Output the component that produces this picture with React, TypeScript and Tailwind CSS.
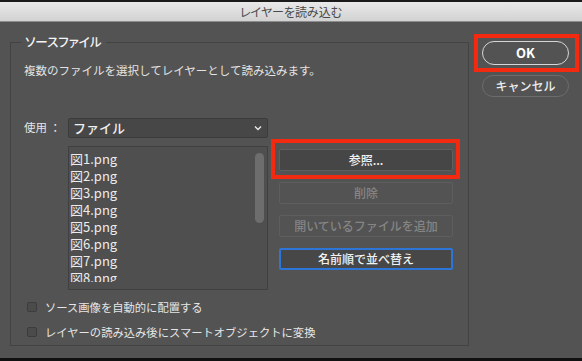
import React from 'react';

const files = ['図1.png', '図2.png', '図3.png', '図4.png', '図5.png', '図6.png', '図7.png', '図8.png'];

const SideButton: React.FC<{ label: string; disabled?: boolean; focused?: boolean; marked?: boolean }> = ({
  label,
  disabled,
  focused,
  marked
}) => (
  <div
    className={`relative h-[22px] flex items-center justify-center rounded-[2px] text-[12px] font-medium ${
      disabled
        ? 'border border-[#5e5e5e] bg-[#535353] text-[#858585]'
        : focused
          ? 'border-2 border-[#2d76d8] bg-[#474747] text-[#f2f2f2]'
          : 'border border-[#5f5f5f] bg-[#464646] text-[#f2f2f2]'
    }`}
  >
    {label}
    {marked && <span className="absolute -left-[9px] -right-[8px] -top-[11px] -bottom-[9px] border-4 border-[#f42a10]" />}
  </div>
);

const Check: React.FC<{ label: string }> = ({ label }) => (
  <div className="flex items-center h-[16px] ml-[3px]">
    <span className="w-[10px] h-[10px] rounded-[2px] border border-[#3c3c3c] bg-[#4b4b4b]" />
    <span className="ml-[8px] text-[11.3px] leading-[16px] text-[#e6e6e6]">{label}</span>
  </div>
);

export default function App() {
  return (
    <div
      className="w-[582px] h-[361px] bg-black flex flex-col overflow-hidden"
      style={{ fontFamily: '"Noto Sans CJK JP", "Noto Sans", sans-serif' }}
    >
      <div className="h-[22px] shrink-0 border-t-2 border-b border-t-[#1a1a1a] border-b-[#8c8c8c] bg-gradient-to-b from-[#e9e9e9] to-[#d2d2d2] flex items-center justify-center text-[12px] text-[#4a4a4a] [font-feature-settings:'palt']">
        レイヤーを読み込む
      </div>

      <div className="h-[336px] shrink-0 bg-[#535353] flex">
        <fieldset className="ml-[10px] mt-[13px] w-[459px] h-[311px] border border-[#434343] pl-[13px] pr-[15px] pb-[5px] flex flex-col">
          <legend className="-ml-[3px] px-[4px] text-[12.5px] leading-[14px] font-medium text-[#f4f4f4] [font-feature-settings:'palt']">
            ソースファイル
          </legend>

          <div className="mt-[13px] text-[11.5px] leading-[16px] text-[#e4e4e4]">
            複数のファイルを選択してレイヤーとして読み込みます。
          </div>

          <div className="mt-[40px] flex items-center h-[20px]">
            <span className="w-[44px] text-[11.5px] text-[#e4e4e4]">使用 ：</span>
            <div className="w-[200px] h-[20px] rounded-[2px] border border-[#3c3c3c] bg-[#474747] flex items-center justify-between pl-[4px] pr-[5px]">
              <span className="text-[13px] font-medium text-[#f0f0f0]">ファイル</span>
              <svg width="8" height="6" viewBox="0 0 8 6" fill="none">
                <path d="M1 1.5 L4 4.5 L7 1.5" stroke="#e8e8e8" strokeWidth="1.4" />
              </svg>
            </div>
          </div>

          <div className="mt-[8px] flex">
            <div className="ml-[44px] w-[200px] h-[144px] border border-[#404040] bg-[#4f4f4f] flex items-start">
              <div className="flex-1 h-[135px] overflow-hidden pl-[1px] pt-[3px]">
                {files.map(f => (
                  <div key={f} className="h-[17px] leading-[17px] text-[13px] text-[#ececec]">
                    {f}
                  </div>
                ))}
              </div>
              <div className="w-[15px] pt-[6px] flex justify-center">
                <div className="w-[9px] h-[70px] rounded-full bg-[#6d6d6d]" />
              </div>
            </div>

            <div className="ml-[11px] w-[174px] pt-[3px] flex flex-col gap-[11px]">
              <SideButton label="参照..." marked />
              <SideButton label="削除" disabled />
              <SideButton label="開いているファイルを追加" disabled />
              <SideButton label="名前順で並べ替え" focused />
            </div>
          </div>

          <div className="mt-[9px] flex flex-col gap-[9px]">
            <Check label="ソース画像を自動的に配置する" />
            <Check label="レイヤーの読み込み後にスマートオブジェクトに変換" />
          </div>
        </fieldset>

        <div className="ml-[13px] mt-[19px] w-[87px] flex flex-col gap-[10px]">
          <div className="relative h-[24px] rounded-full border-[1.5px] border-[#d6d6d6] bg-[#535353] flex items-center justify-center text-[13px] font-bold text-white">
            OK
            <span className="absolute -left-[9px] -right-[11px] -top-[8px] -bottom-[8px] border-4 border-[#f42a10]" />
          </div>
          <div className="h-[22px] rounded-full border border-[#6c6c6c] bg-[#535353] flex items-center justify-center text-[12px] font-medium text-[#ececec]">
            キャンセル
          </div>
        </div>
      </div>

      <div className="flex-1 bg-[#111111]" />
    </div>
  );
}
